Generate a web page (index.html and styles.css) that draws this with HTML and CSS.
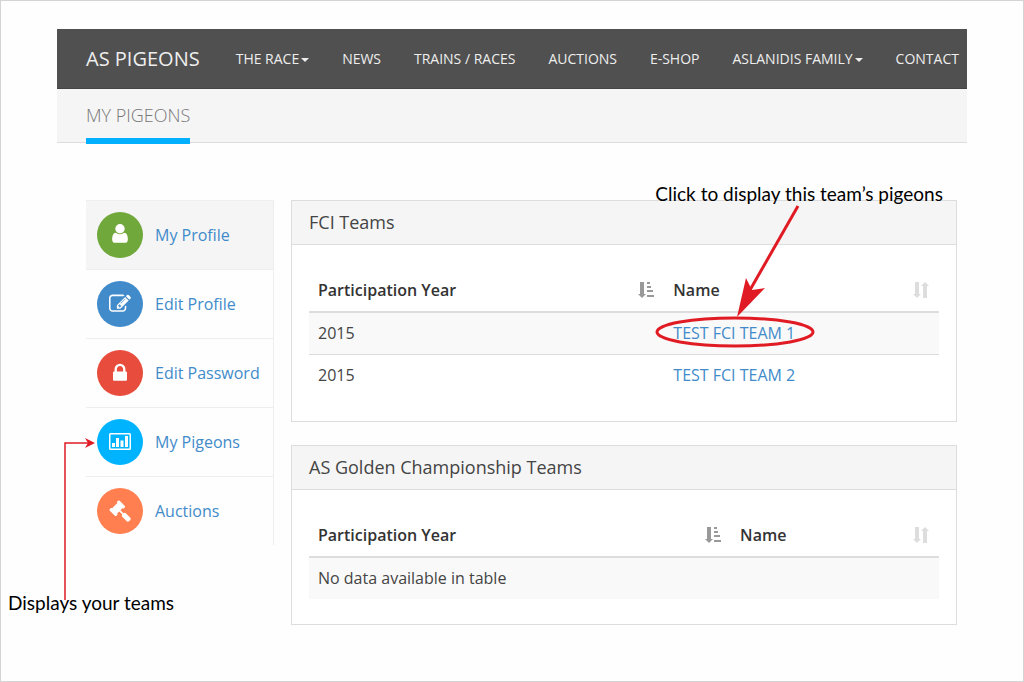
FILE: index.html
```html
<!DOCTYPE html>
<html lang="en">
<head>
    <meta charset="UTF-8">
    <title>My Pigeons</title>
    <link rel="stylesheet" href="styles.css">
</head>
<body>

<div class="wrapper">
    <nav class="navbar">
        <a class="brand" href="#">AS PIGEONS</a>
        <ul class="menu">
            <li><a href="#">THE RACE<span class="caret"></span></a></li>
            <li><a href="#">NEWS</a></li>
            <li><a href="#">TRAINS / RACES</a></li>
            <li><a href="#">AUCTIONS</a></li>
            <li><a href="#">E-SHOP</a></li>
            <li><a href="#">ASLANIDIS FAMILY<span class="caret"></span></a></li>
            <li><a href="#">CONTACT</a></li>
        </ul>
    </nav>
    <header class="page-header">
        <h1>MY PIGEONS</h1>
    </header>

    <div class="content">
        <ul class="sidebar">
            <li class="active">
                <a href="#">
                    <span class="circle green">
                        <svg width="16" height="22" viewBox="0 -1408 1280 1792"><path transform="scale(1,-1)" d="M1280 137q0 -109 -62.5 -187t-150.5 -78h-854q-88 0 -150.5 78t-62.5 187q0 85 8.5 160.5t31.5 152t58.5 131t94 89t134.5 34.5q131 -128 313 -128t313 128q76 0 134.5 -34.5t94 -89t58.5 -131t31.5 -152t8.5 -160.5zM1024 1024q0 -159 -112.5 -271.5t-271.5 -112.5t-271.5 112.5t-112.5 271.5t112.5 271.5t271.5 112.5t271.5 -112.5t112.5 -271.5z"/></svg>
                    </span>
                    My Profile
                </a>
            </li>
            <li>
                <a href="#">
                    <span class="circle blue">
                        <svg width="22" height="22" viewBox="0 -1536 1792 1792"><path transform="scale(1,-1)" d="M888 352l116 116l-152 152l-116 -116v-56h96v-96h56zM1328 1072q-16 16 -33 -1l-350 -350q-17 -17 -1 -33t33 1l350 350q17 17 1 33zM1408 478v-190q0 -119 -84.5 -203.5t-203.5 -84.5h-832q-119 0 -203.5 84.5t-84.5 203.5v832q0 119 84.5 203.5t203.5 84.5h832q63 0 117 -25q15 -7 18 -23q3 -17 -9 -29l-49 -49q-14 -14 -32 -8q-23 6 -45 6h-832q-66 0 -113 -47t-47 -113v-832q0 -66 47 -113t113 -47h832q66 0 113 47t47 113v126q0 13 9 22l64 64q15 15 35 7t20 -29zM1312 1216l288 -288l-672 -672h-288v288zM1756 1084l-92 -92l-288 288l92 92q28 28 68 28t68 -28l152 -152q28 -28 28 -68t-28 -68z"/></svg>
                    </span>
                    Edit Profile
                </a>
            </li>
            <li>
                <a href="#">
                    <span class="circle red">
                        <svg width="14" height="22" viewBox="0 -1536 1152 1792"><path transform="scale(1,-1)" d="M320 768h512v192q0 106 -75 181t-181 75t-181 -75t-75 -181v-192zM1152 672v-576q0 -40 -28 -68t-68 -28h-960q-40 0 -68 28t-28 68v576q0 40 28 68t68 28h32v192q0 184 132 316t316 132t316 -132t132 -316v-192h32q40 0 68 -28t28 -68z"/></svg>
                    </span>
                    Edit Password
                </a>
            </li>
            <li>
                <a href="#">
                    <span class="circle cyan">
                        <svg width="24" height="22" viewBox="0 0 24 22"><path fill-rule="evenodd" d="M2.500 2h19q1.500 0 1.500 1.500v14q0 1.500 -1.500 1.500h-19q-1.500 0 -1.500 -1.500v-14q0 -1.500 1.500 -1.500zM2.500 3.500v14h19v-14z"/><path d="M4 12h3v4h-3zM8 7h3v9h-3zM12.500 9.500h3v6.500h-3zM17 5h3v11h-3z"/></svg>
                    </span>
                    My Pigeons
                </a>
                <div class="note note-teams">
                    <svg width="32" height="164" viewBox="0 0 32 164">
                        <path class="thin" d="M1 163V6H24"/>
                        <path class="head" d="M31 6L21 1L24 6L21 11Z"/>
                    </svg>
                    <p>Displays your teams</p>
                </div>
            </li>
            <li>
                <a href="#">
                    <span class="circle orange">
                        <svg width="22" height="22" viewBox="0 -1536 1792 1792"><path transform="scale(1,-1)" d="M1771 0q0 -53 -37 -90l-107 -108q-39 -37 -91 -37q-53 0 -90 37l-363 364q-38 36 -38 90q0 53 43 96l-256 256l-126 -126q-14 -14 -34 -14t-34 14q2 -2 12.5 -12t12.5 -13t10 -11.5t10 -13.500t6 -13.500t5.500 -16.500t1.500 -18q0 -38 -28 -68q-3 -3 -16.500 -18t-19 -20.500t-18.500 -16.500t-22 -15.500t-22 -9t-26 -4.500q-40 0 -68 28l-408 408q-28 28 -28 68q0 13 4.500 26t9 22t15.500 22t16.500 18.500t20.500 19t18 16.500q30 28 68 28q10 0 18 -1.500t16.500 -5.500t13.500 -6t13.500 -10t11.500 -10t13 -12.500t12 -12.500q-14 14 -14 34t14 34l348 348q14 14 34 14t34 -14q-2 2 -12.500 12t-12.500 13t-10 11.500t-10 13.500t-6 13.500t-5.500 16.500t-1.500 18q0 38 28 68q3 3 16.500 18t19 20.500t18.500 16.500t22 15.500t22 9t26 4.500q40 0 68 -28l408 -408q28 -28 28 -68q0 -13 -4.500 -26t-9 -22t-15.500 -22t-16.500 -18.500t-20.500 -19t-18 -16.500q-30 -28 -68 -28q-10 0 -18 1.500t-16.500 5.500t-13.500 6t-13.500 10t-11.500 10t-13 12.500t-12 12.500q14 -14 14 -34t-14 -34l-126 -126l256 -256q43 43 96 43q52 0 91 -37l363 -363q37 -39 37 -91z"/></svg>
                    </span>
                    Auctions
                </a>
            </li>
        </ul>

        <main class="panels">
            <section class="panel">
                <h2>FCI Teams</h2>
                <div class="panel-body">
                    <table>
                        <thead>
                        <tr>
                            <th class="year">
                                <div class="sort">Participation Year
                                    <svg class="sorted" width="18" height="18" viewBox="0 0 18 18"><path d="M3 0h4v12h2l-4 4l-4 -4h2zM10 0h3v2h-3zM10 4h4v2h-4zM10 8h6v2h-6zM10 13h7v2h-7z"/></svg>
                                </div>
                            </th>
                            <th>
                                <div class="sort">Name
                                    <svg width="18" height="18" viewBox="0 0 18 18"><path d="M3 0h4v12h2l-4 4l-4 -4h2zM11 16h4v-12h2l-4 -4l-4 4h2z"/></svg>
                                </div>
                            </th>
                        </tr>
                        </thead>
                        <tbody>
                        <tr>
                            <td>2015</td>
                            <td>
                                <div class="marked">
                                    <a href="#">TEST FCI TEAM 1</a>
                                    <div class="note note-pigeons">
                                        <p>Click to display this team’s pigeons</p>
                                        <svg width="162" height="146" viewBox="0 0 162 146">
                                            <path class="thick" d="M143 3L95 87"/>
                                            <path class="head" d="M82 114L91 75L97 87L110 85Z"/>
                                            <ellipse class="ring" cx="80" cy="129" rx="78" ry="14"/>
                                        </svg>
                                    </div>
                                </div>
                            </td>
                        </tr>
                        <tr>
                            <td>2015</td>
                            <td><a href="#">TEST FCI TEAM 2</a></td>
                        </tr>
                        </tbody>
                    </table>
                </div>
            </section>

            <section class="panel">
                <h2>AS Golden Championship Teams</h2>
                <div class="panel-body">
                    <table>
                        <thead>
                        <tr>
                            <th class="year-wide">
                                <div class="sort">Participation Year
                                    <svg class="sorted" width="18" height="18" viewBox="0 0 18 18"><path d="M3 0h4v12h2l-4 4l-4 -4h2zM10 0h3v2h-3zM10 4h4v2h-4zM10 8h6v2h-6zM10 13h7v2h-7z"/></svg>
                                </div>
                            </th>
                            <th>
                                <div class="sort">Name
                                    <svg width="18" height="18" viewBox="0 0 18 18"><path d="M3 0h4v12h2l-4 4l-4 -4h2zM11 16h4v-12h2l-4 -4l-4 4h2z"/></svg>
                                </div>
                            </th>
                        </tr>
                        </thead>
                        <tbody>
                        <tr>
                            <td colspan="2">No data available in table</td>
                        </tr>
                        </tbody>
                    </table>
                </div>
            </section>
        </main>
    </div>
</div>

</body>
</html>
```
FILE: styles.css
```css
* {
    margin: 0;
    padding: 0;
    box-sizing: border-box;
    list-style: none;
}

body {
    min-height: 100vh;
    border: 1px solid #d4d4d4;
    background: #fefefe;
    color: #444;
    font: 16px/23px "Open Sans", sans-serif;
}

a {
    color: #428bca;
    text-decoration: none;
}

.wrapper {
    padding: 28px 56px;
}

.navbar {
    display: flex;
    align-items: center;
    height: 60px;
    padding: 0 8px 0 29px;
    background: #505050;
    border-bottom: 1px solid #444;
}

.navbar a {
    color: #eee;
    white-space: nowrap;
}

.navbar .brand {
    margin-right: 36px;
    font-size: 20px;
}

.menu {
    display: flex;
    flex: 1;
    justify-content: space-between;
    font-size: 14px;
}

.caret {
    display: inline-block;
    margin-left: 2px;
    vertical-align: middle;
    border: 4px solid transparent;
    border-top-color: #eee;
    border-bottom: 0;
}

.page-header {
    display: flex;
    height: 54px;
    padding: 0 29px;
    background: #f5f5f5;
    border-bottom: 1px solid #ddd;
}

.page-header h1 {
    height: 55px;
    border-bottom: 6px solid #00b0ff;
    color: #777;
    font-size: 18px;
    font-weight: 300;
    line-height: 52px;
}

.content {
    display: flex;
    gap: 17px;
    align-items: flex-start;
    padding: 57px 10px 0 29px;
}

.sidebar {
    width: 188px;
    border-right: 1px solid #eee;
}

.sidebar li {
    position: relative;
    border-top: 1px solid #eee;
}

.sidebar li > a {
    display: flex;
    align-items: center;
    gap: 12px;
    padding: 11px;
}

.sidebar .active {
    background: #f5f5f5;
}

.circle {
    display: flex;
    justify-content: center;
    align-items: center;
    width: 46px;
    height: 46px;
    border-radius: 50%;
}

.circle svg {
    fill: white;
}

.green {
    background: #70a83b;
}
.blue {
    background: #428bca;
}
.red {
    background: #e74c3c;
}
.cyan {
    background: #00b3ff;
}
.orange {
    background: #ff7f50;
}

.panels {
    flex: 1;
}

.panel {
    margin-bottom: 23px;
    border: 1px solid #ddd;
    background: white;
}

.panel h2 {
    padding: 10px 17px;
    border-bottom: 1px solid #ddd;
    background: #f5f5f5;
    font-size: 18px;
    font-weight: 400;
}

.panel-body {
    padding: 25px 17px;
}

table {
    width: 100%;
    border-collapse: collapse;
}

th {
    padding: 9px;
    border-bottom: 2px solid #ddd;
    color: #333;
    font-weight: 600;
    text-align: left;
}

.year {
    width: 56.4%;
}

.year-wide {
    width: 67%;
}

td {
    padding: 9px;
    border-top: 1px solid #ddd;
}

tbody tr:nth-child(odd) {
    background: #f9f9f9;
}

.sort {
    display: flex;
    justify-content: space-between;
    align-items: center;
}

.sort svg {
    fill: #ddd;
}

.sort .sorted {
    fill: #999;
}

/* red arrows and captions drawn over the page */
.note {
    position: absolute;
    pointer-events: none;
    color: black;
    font: 19px/24px Lato, sans-serif;
    white-space: nowrap;
}

.note svg {
    display: block;
}

.thin,
.thick,
.ring {
    fill: none;
    stroke: #e01b24;
    stroke-width: 1.5;
}

.thick,
.ring {
    stroke-width: 3;
}

.head {
    fill: #e01b24;
}

.note-teams {
    top: 29px;
    left: -78px;
}

.note-teams svg {
    margin-left: 56px;
}

.note-teams p {
    margin-top: -10px;
}

.marked {
    position: relative;
}

.note-pigeons {
    bottom: -4px;
    left: -18px;
}

.note-pigeons p {
    margin-bottom: -3px;
}
```
